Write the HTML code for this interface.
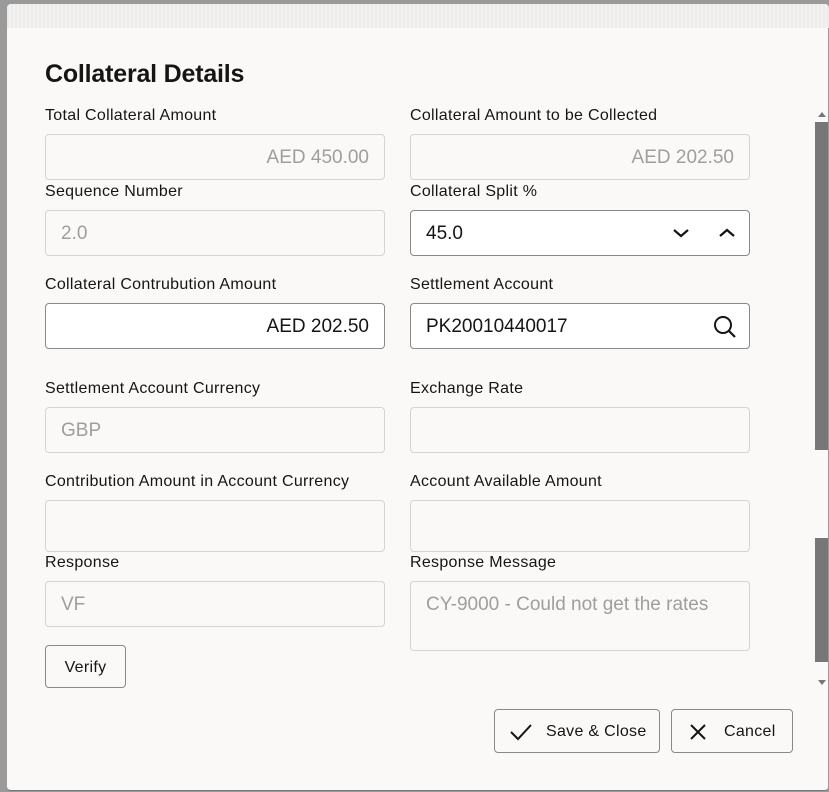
<!DOCTYPE html>
<html><head><style>
*{margin:0;padding:0;box-sizing:border-box}
body{width:829px;height:792px;background:#9a9a9a;position:relative;overflow:hidden;font-family:"Liberation Sans",sans-serif}
#dlg{position:absolute;left:7px;top:4px;width:822px;height:787px;background:#faf9f8;border-radius:4px;border-right:1px solid #999;border-bottom:1px solid #777}
#strip{position:absolute;left:7px;top:4px;width:822px;height:24px;background:repeating-linear-gradient(90deg,#ecebea 0 2px,#f3f2f1 2px 4px);border-radius:4px 4px 0 0}
.a{position:absolute}
h1{position:absolute;left:45px;top:60px;font-size:25px;font-weight:bold;color:#161513;letter-spacing:-0.2px}
.l{position:absolute;font-size:16px;color:#161513;letter-spacing:0.3px;margin-top:1px}
.f{position:absolute;width:340px;height:46px;border:1px solid #d6d4d2;border-radius:4px;background:#faf9f8;font-size:19px;color:#a09e9c;padding:0 15px;line-height:46px}
.e{background:#fff;border-color:#8a8987;color:#161513}
.r{text-align:right}
.sb{position:absolute;left:815px;width:13px;background:#777}
.btn{position:absolute;border:1px solid #8a8987;border-radius:4px;background:#faf9f8;font-size:16px;color:#161513;text-align:center;letter-spacing:0.3px}
</style></head><body>
<div id="dlg"></div><div id="strip"></div>
<h1>Collateral Details</h1>
<div class="l" style="left:45px;top:106px">Total Collateral Amount</div>
<div class="l" style="left:410px;top:106px">Collateral Amount to be Collected</div>
<div class="f r" style="left:45px;top:134px">AED 450.00</div>
<div class="f r" style="left:410px;top:134px">AED 202.50</div>
<div class="l" style="left:45px;top:182px">Sequence Number</div>
<div class="l" style="left:410px;top:182px">Collateral Split %</div>
<div class="f" style="left:45px;top:210px">2.0</div>
<div class="f e" style="left:410px;top:210px">45.0
<svg class="a" style="left:260px;top:15px" width="20" height="14" viewBox="0 0 20 14"><path d="M3 4l7 6 7-6" fill="none" stroke="#161513" stroke-width="2.2"/></svg>
<svg class="a" style="left:306px;top:15px" width="20" height="14" viewBox="0 0 20 14"><path d="M3 10l7-6 7 6" fill="none" stroke="#161513" stroke-width="2.2"/></svg></div>
<div class="l" style="left:45px;top:275px">Collateral Contrubution Amount</div>
<div class="l" style="left:410px;top:275px">Settlement Account</div>
<div class="f e r" style="left:45px;top:303px">AED 202.50</div>
<div class="f e" style="left:410px;top:303px">PK20010440017
<svg class="a" style="left:301px;top:10px" width="26" height="26" viewBox="0 0 26 26"><circle cx="11" cy="11" r="8" fill="none" stroke="#161513" stroke-width="2"/><path d="M17 17l6 6" stroke="#161513" stroke-width="2.2"/></svg></div>
<div class="l" style="left:45px;top:379px">Settlement Account Currency</div>
<div class="l" style="left:410px;top:379px">Exchange Rate</div>
<div class="f" style="left:45px;top:407px">GBP</div>
<div class="f" style="left:410px;top:407px"></div>
<div class="l" style="left:45px;top:472px">Contribution Amount in Account Currency</div>
<div class="l" style="left:410px;top:472px">Account Available Amount</div>
<div class="f" style="left:45px;top:500px;height:52px"></div>
<div class="f" style="left:410px;top:500px;height:52px"></div>
<div class="l" style="left:45px;top:553px">Response</div>
<div class="l" style="left:410px;top:553px">Response Message</div>
<div class="f" style="left:45px;top:581px">VF</div>
<div class="f" style="left:410px;top:581px;height:70px;line-height:46px">CY-9000 - Could not get the rates</div>
<div class="btn" style="left:45px;top:645px;width:81px;height:43px;line-height:43px">Verify</div>
<div class="btn" style="left:494px;top:709px;width:166px;height:44px;line-height:44px;padding-left:51px;text-align:left"><svg class="a" style="left:14px;top:12px" width="24" height="20" viewBox="0 0 24 20"><path d="M2 10l7 7L22 3" fill="none" stroke="#161513" stroke-width="2"/></svg>Save &amp; Close</div>
<div class="btn" style="left:671px;top:709px;width:122px;height:44px;line-height:44px;padding-left:52px;text-align:left"><svg class="a" style="left:17px;top:13px" width="18" height="18" viewBox="0 0 18 18"><path d="M2 2l14 14M16 2L2 16" stroke="#161513" stroke-width="2"/></svg>Cancel</div>
<svg class="a" style="left:817px;top:111px" width="10" height="7"><path d="M1 6h8L5 1z" fill="#777"/></svg>
<div class="sb" style="top:122px;height:328px"></div>
<div class="sb" style="top:538px;height:124px"></div>
<svg class="a" style="left:817px;top:679px" width="10" height="7"><path d="M1 1h8L5 6z" fill="#777"/></svg>
</body></html>
